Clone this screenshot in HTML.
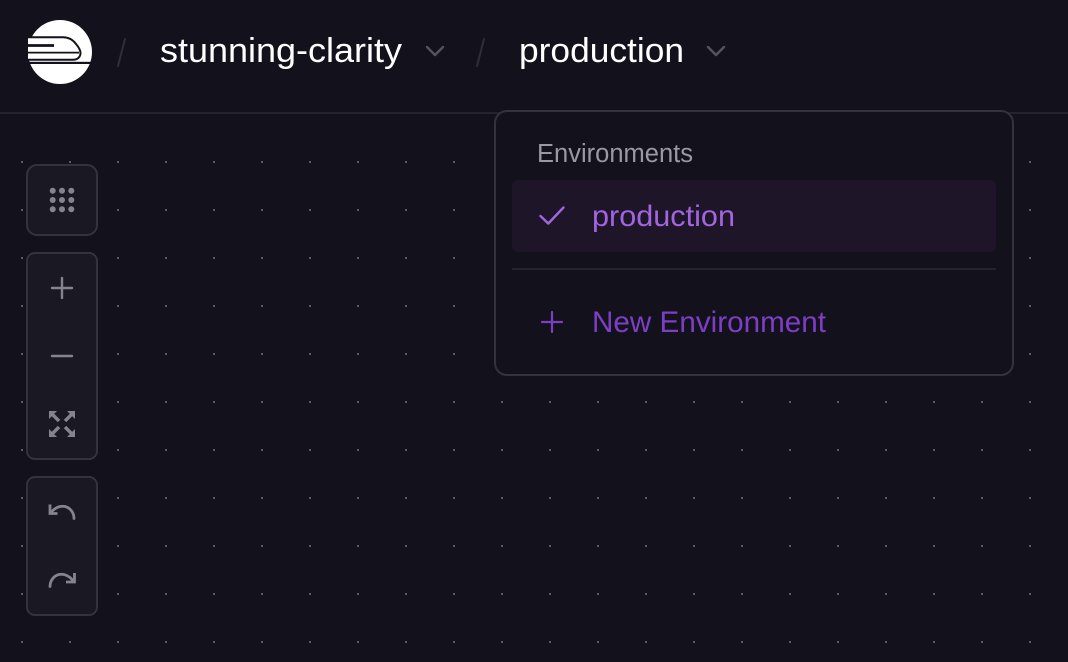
<!DOCTYPE html>
<html><head><meta charset="utf-8"><style>
html,body{margin:0;padding:0;width:1068px;height:662px;overflow:hidden;background:#13111c}
svg{display:block}
text{font-family:"Liberation Sans",sans-serif}
</style></head><body>
<svg width="1068" height="662" viewBox="0 0 1068 662" xmlns="http://www.w3.org/2000/svg">
<defs>
<pattern id="d" x="21" y="17" width="48" height="48" patternUnits="userSpaceOnUse"><rect width="2" height="2" fill="#5d5b66"/></pattern>
<clipPath id="lc"><rect x="28" y="20" width="64" height="64"/></clipPath>
</defs>
<rect width="1068" height="662" fill="#13111c"/>
<rect y="120" width="1068" height="542" fill="url(#d)"/>
<rect y="112" width="1068" height="2" fill="#25232e"/>

<!-- logo -->
<g clip-path="url(#lc)">
<circle cx="60" cy="52" r="32" fill="#fff"/>
<rect x="28" y="38" width="30" height="22" fill="#fff"/>
<path d="M26 37.300H63C69 37.300 73 40 76 44C79 47.500 80.500 50 80.500 53C80.500 57 77.500 59.800 73 59.800H26" fill="none" stroke="#13111c" stroke-width="2"/>
<path d="M26 45.500H54" stroke="#13111c" stroke-width="2.800"/>
<path d="M26 52.600H79" stroke="#13111c" stroke-width="1.800"/>
<rect x="24" y="61.800" width="70" height="2.200" fill="#13111c"/>
</g>

<!-- breadcrumbs -->
<path d="M125 39L118 66" stroke="#302e38" stroke-width="2" stroke-linecap="round"/>
<text x="160" y="62" font-size="34" fill="#fff" textLength="242" lengthAdjust="spacingAndGlyphs">stunning-clarity</text>
<path d="M427 47L435 55L443 47" fill="none" stroke="#55535d" stroke-width="2.400" stroke-linecap="round" stroke-linejoin="round"/>
<path d="M484 39L477 66" stroke="#302e38" stroke-width="2" stroke-linecap="round"/>
<text x="519" y="62" font-size="34" fill="#fff" textLength="165" lengthAdjust="spacingAndGlyphs">production</text>
<path d="M708 47L716 55L724 47" fill="none" stroke="#55535d" stroke-width="2.400" stroke-linecap="round" stroke-linejoin="round"/>

<!-- toolbar -->
<g fill="#1a1823" stroke="#34323c" stroke-width="2">
<rect x="27" y="165" width="70" height="70" rx="10"/>
<rect x="27" y="253" width="70" height="206" rx="8"/>
<rect x="27" y="477" width="70" height="138" rx="8"/>
</g>
<g fill="#85838d">
<circle cx="52.700" cy="190.700" r="3"/><circle cx="62" cy="190.700" r="3"/><circle cx="71.300" cy="190.700" r="3"/>
<circle cx="52.700" cy="200" r="3"/><circle cx="62" cy="200" r="3"/><circle cx="71.300" cy="200" r="3"/>
<circle cx="52.700" cy="209.300" r="3"/><circle cx="62" cy="209.300" r="3"/><circle cx="71.300" cy="209.300" r="3"/>
</g>
<g fill="none" stroke="#85838d" stroke-width="2.400" stroke-linecap="round">
<path d="M52 288H72M62 278V298"/>
<path d="M52 356H72"/>
</g>
<g fill="#85838d">
<polygon points="49,411 57,411 49,419"/>
<polygon points="75,411 67,411 75,419"/>
<polygon points="49,437 57,437 49,429"/>
<polygon points="75,437 67,437 75,429"/>
</g>
<g fill="none" stroke="#85838d" stroke-width="3.400">
<path d="M51 413L59 421"/>
<path d="M73 413L65 421"/>
<path d="M51 435L59 427"/>
<path d="M73 435L65 427"/>
</g>
<g fill="none" stroke="#85838d" stroke-width="2.800" stroke-linecap="round">
<path d="M50 504.500V513.500H57.500" stroke-linecap="butt"/>
<path d="M50.500 513C55 507.500 60 505.500 65 506.500C70.500 507.800 74 513 74 518.500"/>
<path d="M74.500 573V582H66" stroke-linecap="butt"/>
<path d="M74 581.500C69 575.500 64 573.500 59 574.500C53.500 575.800 50 581 50 586.500"/>
</g>

<!-- dropdown -->
<rect x="495" y="111" width="518" height="264" rx="12" fill="#13111c" stroke="#34323c" stroke-width="2"/>
<text x="537" y="162" font-size="25.500" fill="#9a98a2" textLength="156" lengthAdjust="spacingAndGlyphs">Environments</text>
<rect x="512" y="180" width="484" height="72" rx="6" fill="#1f1528"/>
<path d="M540.500 216L548.300 223.500L563.500 207.500" fill="none" stroke="#a165e0" stroke-width="2.400" stroke-linecap="round" stroke-linejoin="round"/>
<text x="592" y="226" font-size="30" fill="#a165e0" textLength="143" lengthAdjust="spacingAndGlyphs">production</text>
<rect x="512" y="268" width="484" height="2" fill="#25232e"/>
<path d="M542 322H562M552 312V332" fill="none" stroke="#7c3fc4" stroke-width="2.200" stroke-linecap="round"/>
<text x="592" y="332" font-size="30" fill="#7c3fc4" textLength="234" lengthAdjust="spacingAndGlyphs">New Environment</text>
</svg>
</body></html>
